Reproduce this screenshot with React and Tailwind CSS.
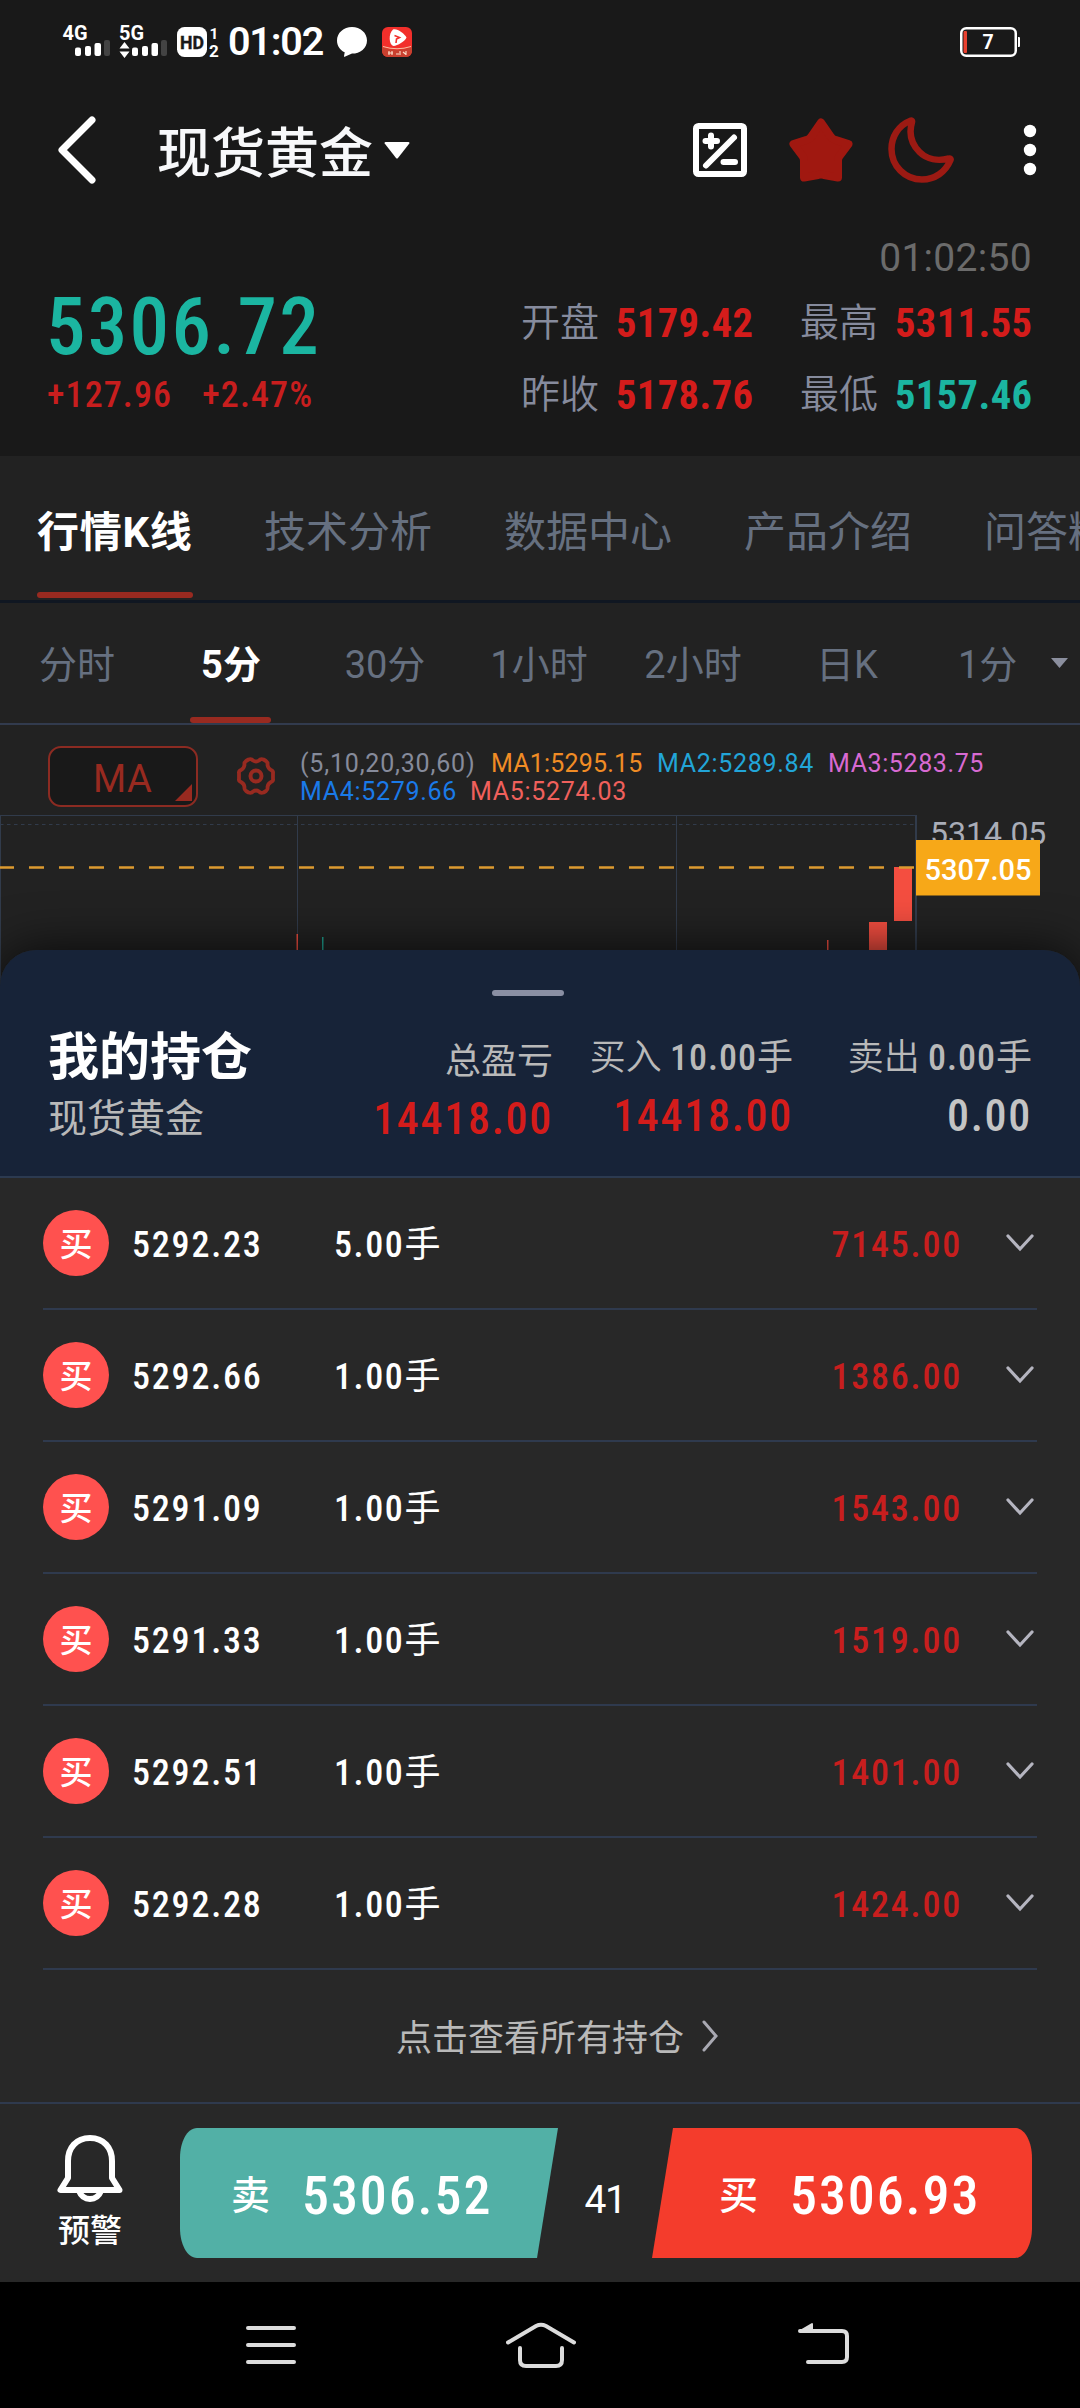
const tabs = ["行情K线", "技术分析", "数据中心", "产品介绍", "问答精选"];
const periods = ["分时", "5分", "30分", "1小时", "2小时", "日K"];

const quotes = [
  { label: "开盘", value: "5179.42", color: "text-[#d41c1b]" },
  { label: "最高", value: "5311.55", color: "text-[#d41c1b]" },
  { label: "昨收", value: "5178.76", color: "text-[#d41c1b]" },
  { label: "最低", value: "5157.46", color: "text-[#1bb5a1]" },
];

const positions = [
  { price: "5292.23", lots: "5.00", profit: "7145.00" },
  { price: "5292.66", lots: "1.00", profit: "1386.00" },
  { price: "5291.09", lots: "1.00", profit: "1543.00" },
  { price: "5291.33", lots: "1.00", profit: "1519.00" },
  { price: "5292.51", lots: "1.00", profit: "1401.00" },
  { price: "5292.28", lots: "1.00", profit: "1424.00" },
];

function StatusBar() {
  return (
    <div className="flex h-[84px] items-center justify-between pl-[62px] pr-[60px]">
      <div className="flex items-center">
        {/* signal bars for both SIMs */}
        <svg width="160" height="36" viewBox="62 24 160 36" className="overflow-visible font-['Roboto'] font-bold">
          <g fill="#fff" fontSize="20.5">
            <text x="62.5" y="40" textLength="25" lengthAdjust="spacingAndGlyphs">4G</text>
            <text x="119" y="40" textLength="25" lengthAdjust="spacingAndGlyphs">5G</text>
          </g>
          <g fill="#fff">
            <rect x="75" y="47.5" width="6" height="8.5" rx="2" />
            <rect x="85" y="46" width="6" height="10" rx="2" />
            <rect x="94.5" y="43" width="6.5" height="13" rx="2" />
            <rect x="132" y="47.5" width="6" height="8.5" rx="2" />
            <rect x="142" y="46" width="6" height="10" rx="2" />
            <rect x="151.5" y="43" width="6.5" height="13" rx="2" />
            <path d="M124.500 42l5 6.500h-10zM124.500 58l5-6.500h-10z" />
            <rect x="177" y="27" width="30" height="30" rx="7.500" />
          </g>
          <rect x="104" y="40" width="6" height="16" rx="2" fill="#434343" />
          <rect x="161" y="40" width="6" height="16" rx="2" fill="#434343" />
          <text x="180" y="49" fontSize="18.500" fill="#191919" stroke="#191919" strokeWidth=".4" textLength="24" lengthAdjust="spacingAndGlyphs">HD</text>
          <text x="209.500" y="38.500" fontSize="15.500" fill="#fff">1</text>
          <text x="209" y="56.500" fontSize="17" fill="#fff">2</text>
        </svg>
        <span className="ml-[6px] w-[109px] text-[39.5px] leading-[86px] font-semibold tracking-[-1.2px] text-white">01:02</span>
        <svg width="30" height="30" viewBox="0 0 30 30">
          <path fill="#fff" d="M15 0c8.300 0 15 5.900 15 13.400S23.300 26.500 15 26.600l-7.300 3.200c-.5.200-.8-.1-.7-.5l.7-4.100C3 23.200 0 18.500 0 13.400 0 5.900 6.700 0 15 0z" />
        </svg>
        <svg width="30" height="30" viewBox="0 0 30 30" className="ml-[15px]">
          <rect width="30" height="30" rx="6" fill="#f22f2b" />
          <path d="M0 20q15 6 30 0v4a6 6 0 0 1-6 6H6a6 6 0 0 1-6-6z" fill="#c9402f" />
          <path d="M1 19.500q14 4.500 28 0" fill="none" stroke="#f7c0a0" strokeWidth="1" />
          <path d="M11 2.500c4-1.500 12 4.500 13.500 8-1.500 4-9 8-13 8.500C7 18 6 7 11 2.500z" fill="#fff" />
          <path d="M12.500 8.500l5 2-3 1.500-.5 4" fill="none" stroke="#f22f2b" strokeWidth="1.600" />
          <path d="M6 26h5M7 24v4M10 24v4M14 27h3M18 24v4M21 25l3 2.500M24 24v4" stroke="#fde0cc" strokeWidth="1.100" />
        </svg>
      </div>
      <svg width="60" height="30" viewBox="0 0 60 30">
        <rect x="1.250" y="1.250" width="54.500" height="27.500" rx="5" fill="none" stroke="#fff" strokeWidth="2.500" />
        <path d="M58 10h1q1 0 1 1v8q0 1-1 1h-1z" fill="#fff" />
        <rect x="3.500" y="4" width="3.500" height="22" rx="1" fill="#e8402f" />
        <text x="28" y="22" fontSize="19.500" textAnchor="middle" fill="#fff" className="font-['Roboto'] font-bold">7</text>
      </svg>
    </div>
  );
}

function Header() {
  return (
    <div className="flex h-[132px] items-center pl-[57px] pr-[42px]">
      <svg width="40" height="68" viewBox="0 0 40 68">
        <path d="M35 4L5 34l30 30" fill="none" stroke="#fff" strokeWidth="7" strokeLinecap="round" strokeLinejoin="round" />
      </svg>
      <h1 className="ml-[60px] pt-[10px] text-[54px] leading-[122px] font-medium text-[#f7f8fa]">现货黄金</h1>
      <svg width="26" height="17" viewBox="0 0 26 17" className="ml-[11px]">
        <path d="M1.500 0h23q1.500 0 .8 1.500L14 16q-1 1-2 0L.7 1.500Q0 0 1.500 0z" fill="#fff" />
      </svg>
      <div className="ml-auto flex items-center">
        <svg width="54" height="54" viewBox="0 0 54 54" fill="none" stroke="#fff">
          <rect x="3" y="3" width="48" height="48" rx="2.500" strokeWidth="6" />
          <path d="M13 42.500L41 14.500M18 12.500v11M12.500 18h11.500M30.500 39h11.500" strokeWidth="6" strokeLinecap="round" />
        </svg>
        <svg width="64" height="64" viewBox="0 0 64 64" className="ml-[42px]">
          <path
            d="M32 4.500L42 19Q44 21.500 47 22.200L59.500 26 50.500 38Q49 40 49 43v16.500L35 57q-3-1-6 0L15 59.500V43q0-3-1.500-5L4.500 26 17 22.200Q20 21.500 22 19z"
            fill="#a01810"
            stroke="#a01810"
            strokeWidth="8"
            strokeLinejoin="round"
          />
        </svg>
        <svg width="66" height="66" viewBox="0 0 66 66" className="ml-[35px]">
          <path
            d="M23 3.500C10 8.500 3.500 20 3.500 32c0 17 13.500 30.500 30.500 30.500 13 0 23.500-7.500 28.500-19.500.5-1.200-.5-1.800-1.500-1.500-11 3-22 1-29.500-6.500-7.500-7.500-11-18-7.500-30 .3-1.200-.3-1.700-1-1.500z"
            fill="none"
            stroke="#9c1a13"
            strokeWidth="6.500"
            strokeLinejoin="round"
          />
        </svg>
        <svg width="16" height="54" viewBox="0 0 16 54" fill="#fff" className="ml-[68px]">
          <circle cx="8" cy="8" r="6.200" />
          <circle cx="8" cy="27" r="6.200" />
          <circle cx="8" cy="46" r="6.200" />
        </svg>
      </div>
    </div>
  );
}

function Quote() {
  return (
    <div className="h-[240px] pt-[13px]">
      <div className="pr-[48px] text-right text-[39px] leading-[58px] tracking-[0.3px] text-[#6b6b6b]">01:02:50</div>
      <div className="flex justify-between pl-[46px] pr-[47px] font-['Roboto_Condensed','Noto_Sans_CJK_SC',sans-serif]">
        <div className="pt-1">
          <div className="text-[79px] leading-[72px] font-medium tracking-[2.3px] text-[#1bb5a1]">5306.72</div>
          <div className="flex gap-[30px] pl-px text-[36px] leading-[64px] font-medium tracking-[1.1px] text-[#c81e1e]">
            <span>+127.96</span>
            <span>+2.47%</span>
          </div>
        </div>
        <div className="grid grid-cols-[279px_233px] leading-[72px]">
          {quotes.map((q) => (
            <div key={q.label} className="flex">
              <span className="w-[95px] text-[39px] font-[350] text-[#868b9d]">{q.label}</span>
              <span className={`text-[40.5px] font-bold tracking-[0.4px] ${q.color}`}>{q.value}</span>
            </div>
          ))}
        </div>
      </div>
    </div>
  );
}

function Tabs() {
  return (
    <div className="flex h-[147px] gap-[72px] overflow-hidden border-b-[3px] border-[#101722] pl-[37px] text-[42px] leading-[154px] whitespace-nowrap">
      {tabs.map((t, i) => (
        <div key={t} className={`relative shrink-0 ${i === 0 ? "w-[155px] font-bold tracking-[0.7px] text-white" : "text-[#667080]"}`}>
          {t}
          {i === 0 && <span className="absolute top-[136px] left-0 h-[6px] w-[156px] rounded-full bg-[#982a20]" />}
        </div>
      ))}
    </div>
  );
}

function Periods() {
  return (
    <div className="flex h-[122px] border-b-2 border-[#323b4e] text-[38px] leading-[124px] text-[#667080]">
      {periods.map((p, i) => (
        <div key={p} className={`relative w-[154px] text-center ${i === 1 ? "font-bold text-white" : ""}`}>
          {p}
          {i === 1 && <span className="absolute bottom-0 left-[36px] h-[6px] w-[81px] rounded-full bg-[#982a20]" />}
        </div>
      ))}
      <div className="ml-[34px]">1分</div>
      <svg width="17" height="10" viewBox="0 0 17 10" className="mt-[55px] ml-[34px]">
        <path d="M0 0h17L8.500 10z" fill="#8b8f9e" />
      </svg>
    </div>
  );
}

function Indicator() {
  return (
    <div className="flex h-[90px] pt-[21px] pl-[48px]">
      <div className="relative h-[61px] w-[150px] rounded-[13px] border-2 border-[#8c2b22] bg-[#191919] pl-[43px] text-[38px] leading-[62px] tracking-[0.5px] text-[#982a20]">
        MA
        <svg width="17" height="17" viewBox="0 0 17 17" className="absolute right-[4px] bottom-[4px]">
          <path d="M17 0v17H0z" fill="#982a20" />
        </svg>
      </div>
      <svg width="40" height="40" viewBox="-20 -20 40 40" fill="none" stroke="#982a20" className="mt-[10px] ml-[38px]">
        <path
          d="M-7.500 -16.500Q-4.500 -17.500 -3 -15.500Q0 -13.500 3 -15.500Q4.500 -17.500 7.500 -16.500L10 -15Q12 -13.500 11.500 -11Q12 -7.500 15 -6Q17.500 -5 17 -2.500V2.500Q17.500 5 15 6Q12 7.500 11.500 11Q12 13.500 10 15L7.500 16.500Q4.500 17.500 3 15.500Q0 13.500 -3 15.500Q-4.500 17.500 -7.500 16.500L-10 15Q-12 13.500 -11.500 11Q-12 7.500 -15 6Q-17.500 5 -17 2.500V-2.500Q-17.500 -5 -15 -6Q-12 -7.500 -11.500 -11Q-12 -13.500 -10 -15Z"
          strokeWidth="3.800"
          strokeLinejoin="round"
        />
        <circle r="5.500" strokeWidth="4" />
      </svg>
      <div className="mt-[4px] ml-[24px] text-[25px] leading-[28px] tracking-[0.5px]">
        <div className="flex">
          <span className="w-[191px] tracking-[0.8px] text-[#868b9b]">(5,10,20,30,60)</span>
          <span className="w-[166px] tracking-[0.2px] text-[#f08c25]">MA1:5295.15</span>
          <span className="w-[171px] tracking-[0.7px] text-[#22a5d8]">MA2:5289.84</span>
          <span className="tracking-[0.6px] text-[#d86ad2]">MA3:5283.75</span>
        </div>
        <div className="flex">
          <span className="w-[170px] tracking-[0.7px] text-[#1a7ae8]">MA4:5279.66</span>
          <span className="tracking-[0.7px] text-[#f0605c]">MA5:5274.03</span>
        </div>
      </div>
    </div>
  );
}

function Chart() {
  return (
    <svg width="1080" height="175" viewBox="0 815 1080 175" className="block">
      <g stroke="#313b4b" strokeWidth="1" fill="none">
        <path d="M0 815.500H917M.5 815V990M297.500 815V990M676.500 815V990" />
        <path d="M916 815V990" strokeWidth="2" />
        <path d="M0 824.500H915" strokeDasharray="3.500 3.500" />
      </g>
      <g fill="#f44e40">
        <rect x="894" y="867" width="18" height="54" />
        <rect x="869" y="922" width="18" height="68" />
        <rect x="296.500" y="934" width="1.500" height="56" />
        <rect x="827" y="940" width="1.500" height="50" />
      </g>
      <rect x="322" y="937" width="1.500" height="53" fill="#1fa08f" />
      <path d="M-1 867.500H914" stroke="#dd9b30" strokeWidth="2.600" strokeDasharray="15 15" />
      <text x="930" y="844" fontSize="32" fill="#a9adb8">5314.05</text>
      <rect x="916" y="840" width="124" height="55.500" fill="#f7a818" />
      <text x="924.500" y="879.500" fontSize="29" fill="#fff" className="font-medium">5307.05</text>
    </svg>
  );
}

function SheetHeader() {
  return (
    <div className="flex h-[228px] flex-col items-stretch rounded-t-[36px] border-b-2 border-[#2c3a50] bg-[#172338]">
      <div className="mt-[40px] ml-[492px] h-[6px] w-[72px] rounded-full bg-[#8a8fa3]" />
      <div className="flex pt-[24px] pl-[48px] pr-[48px] font-['Roboto_Condensed','Noto_Sans_CJK_SC',sans-serif] text-[#b9b9b9]">
        <div className="w-[211px]">
          <div className="text-[51px] leading-[76px] font-bold whitespace-nowrap text-white">我的持仓</div>
          <div className="text-[39px] leading-[46px]">现货黄金</div>
        </div>
        <div className="mt-[8px] w-[294px] text-right">
          <div className="text-[36px] leading-[68px]">总盈亏</div>
          <div className="text-[44px] leading-[47px] font-medium tracking-[1.7px] text-[#d41c1b]">14418.00</div>
        </div>
        <div className="mt-[4px] w-[240px] text-right">
          <div className="text-[36px] leading-[69px]">
            <span className="font-[350]">买入</span> <span className="font-medium tracking-[1px]">10.00</span>手
          </div>
          <div className="text-[44px] leading-[46px] font-medium tracking-[1.7px] text-[#d41c1b]">14418.00</div>
        </div>
        <div className="mt-[4px] w-[239px] text-right">
          <div className="text-[36px] leading-[69px]">
            <span className="font-[350]">卖出</span> <span className="font-medium tracking-[1px]">0.00</span>手
          </div>
          <div className="text-[44px] leading-[46px] font-medium tracking-[1.7px] text-[#c4c4c4]">0.00</div>
        </div>
      </div>
    </div>
  );
}

function PositionRow({ price, lots, profit }) {
  return (
    <div className="mx-[43px] flex h-[132px] items-center border-b-2 border-[#2f3a4e] text-[36px] leading-[60px] font-['Roboto_Condensed','Noto_Sans_CJK_SC',sans-serif]">
      <div className="h-[66px] w-[66px] rounded-full bg-[#ff514f] text-center text-[33px] leading-[69px] font-medium text-white">买</div>
      <span className="mt-[3px] ml-[23px] w-[202px] font-medium tracking-[1.8px] text-white">{price}</span>
      <span className="mt-[3px] text-white">
        <span className="font-medium tracking-[1.6px]">{lots}</span>手
      </span>
      <span className="mt-[3px] ml-auto font-medium tracking-[1.8px] text-[#c81e1e]">{profit}</span>
      <svg width="28" height="18" viewBox="0 0 28 18" className="mr-[3px] ml-[44px]">
        <path d="M2 2l12 13L26 2" fill="none" stroke="#b5b5c0" strokeWidth="3.2" strokeLinecap="round" />
      </svg>
    </div>
  );
}

function TradeBar() {
  return (
    <div className="flex h-[178px] items-center pl-[52px] pr-[48px] text-white font-['Roboto_Condensed','Noto_Sans_CJK_SC',sans-serif]">
      <div className="flex w-[76px] flex-col items-center">
        <svg width="68" height="68" viewBox="0 0 68 68" fill="none" stroke="#fff" strokeWidth="6" strokeLinejoin="round">
          <path d="M34 4C20 4 12 14 12 27v17L4.500 56h59L56 44V27C56 14 48 4 34 4z" />
          <path d="M23 57c2 5 6 8 11 8s9-3 11-8" />
        </svg>
        <span className="mt-[8px] text-[32px] leading-[42px] font-medium">预警</span>
      </div>
      <div className="relative ml-[52px] h-[130px] w-[378px]">
        <svg width="378" height="130" viewBox="0 0 378 130" className="absolute inset-0">
          <path d="M378 0L357 130H17C7 130 0 116 0 100V30C0 14 7 0 17 0z" fill="#52b0a6" />
        </svg>
        <div className="relative flex pl-[51px] leading-[136px] font-medium">
          <span className="w-[71px] text-[39px]">卖</span>
          <span className="text-[54px] tracking-[1.9px]">5306.52</span>
        </div>
      </div>
      <div className="w-[94px] pt-[14px] text-center font-['Roboto'] text-[39px] leading-[60px] tracking-[-1.5px]">41</div>
      <div className="relative h-[130px] w-[380px]">
        <svg width="380" height="130" viewBox="0 0 380 130" className="absolute inset-0">
          <path d="M21 0H363C373 0 380 14 380 30v70c0 16-7 30-17 30H0z" fill="#f43c2c" />
        </svg>
        <div className="relative flex pl-[67px] leading-[136px] font-medium">
          <span className="w-[71px] text-[39px]">买</span>
          <span className="text-[54px] tracking-[1.9px]">5306.93</span>
        </div>
      </div>
    </div>
  );
}

function SystemNav() {
  return (
    <div className="flex h-[126px] bg-black pl-[246px]">
      <svg width="50" height="40" viewBox="0 0 50 40" className="mt-[43px]" stroke="#dcdcdc" strokeWidth="4" strokeLinecap="round">
        <path d="M2 3h46M2 20h46M2 37h46" />
      </svg>
      <svg width="70" height="46" viewBox="0 0 70 46" className="mt-[40px] ml-[210px]" fill="none" stroke="#dcdcdc" strokeWidth="4" strokeLinecap="round">
        <path d="M2 20.500L30 4q5-2.500 10 0l28 16.500M14 26v12q0 6 6 6h30q6 0 6-6V26" />
      </svg>
      <svg width="52" height="44" viewBox="0 0 52 44" className="mt-[40px] ml-[222px]" fill="none" stroke="#dcdcdc" strokeWidth="4" strokeLinecap="round">
        <path d="M2 9h42q5 0 5 5v21q0 5-5 5H10" />
        <path d="M2 9L14 2v7z" fill="#dcdcdc" strokeWidth="2" strokeLinejoin="round" />
      </svg>
    </div>
  );
}

export default function App() {
  return (
    <div className="h-[2408px] w-[1080px] overflow-hidden bg-[#222] font-['Roboto','Noto_Sans_CJK_SC',sans-serif]">
      <div className="bg-[#191919]">
        <StatusBar />
        <Header />
        <Quote />
      </div>
      <Tabs />
      <Periods />
      <Indicator />
      <Chart />
      <div className="relative mt-[-40px] rounded-t-[36px] bg-[#282828] shadow-[0_0_50px_rgba(0,0,0,0.75)]">
        <SheetHeader />
        {positions.map((p) => (
          <PositionRow key={p.price} {...p} />
        ))}
        <div className="flex h-[134px] items-center border-b-2 border-[#2f3a4e] pl-[396px] text-[36px] leading-[60px] text-[#b9b9b9]">
          <span className="mt-[6px]">点击查看所有持仓</span>
          <svg width="18" height="32" viewBox="0 0 18 32" className="ml-[17px]">
            <path d="M3 2l12 14L3 30" fill="none" stroke="#a9a9b2" strokeWidth="3" strokeLinecap="round" />
          </svg>
        </div>
        <TradeBar />
        <SystemNav />
      </div>
    </div>
  );
}
